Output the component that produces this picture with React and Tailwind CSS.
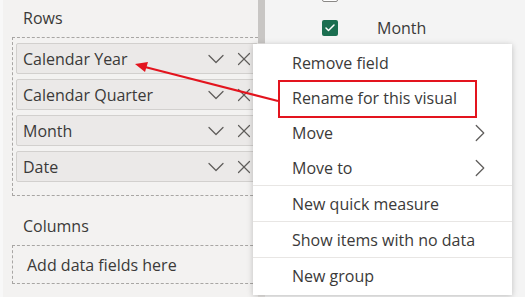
import { ChevronDown, ChevronRight, X, Check } from 'lucide-react'

const ROWS = ['Calendar Year', 'Calendar Quarter', 'Month', 'Date']

const MENU = [
  { label: 'Remove field' },
  { label: 'Rename for this visual' },
  { label: 'Move', sub: true },
  { label: 'Move to', sub: true, sep: true },
  { label: 'New quick measure', sep: true },
  { label: 'Show items with no data', sep: true },
  { label: 'New group' },
]

function FieldPill({ name }) {
  return (
    <div className="h-[31px] flex items-center pl-[6px] pr-[2px] bg-[#ebe9e8] border border-[#d2d0ce] rounded-[2px]">
      <span className="flex-1 truncate">{name}</span>
      <ChevronDown size={28} strokeWidth={1.1} className="text-[#605e5c] mr-[3px]" />
      <X size={22} strokeWidth={1.3} className="text-[#605e5c]" />
    </div>
  )
}

function FieldsList() {
  return (
    <div className="flex-1 bg-[#f4f4f4] pl-[57px] -mt-[23px]">
      <div className="h-[34px] flex items-center">
        <div className="w-[16px] h-[16px] rounded-[2px] border border-[#8a8886] bg-white" />
        <div className="w-[14px] h-[11px] ml-[9px] border-2 border-[#605e5c] rounded-[1px]" />
        <span className="ml-[16px]">Full Date</span>
      </div>
      <div className="h-[34px] flex items-center">
        <div className="w-[16px] h-[16px] rounded-[2px] bg-[#1b6e50] flex items-center justify-center">
          <Check size={12} strokeWidth={3} className="text-white" />
        </div>
        <span className="ml-[39px]">Month</span>
      </div>
    </div>
  )
}

export default function App() {
  return (
    <div
      className="relative w-[525px] h-[297px] overflow-hidden flex text-[16px] text-[#3b3a39]"
      style={{ fontFamily: '"Open Sans", "Noto Sans", sans-serif' }}
    >
      <div className="w-[258px] bg-[#f3f2f1] border-l-[3px] border-[#f8f8f8] pl-[9px] pt-[8px] shrink-0">
        <div className="h-[29px] pl-[11px] leading-[20px]">Rows</div>
        <div className="border border-dashed border-[#a8a6a4] border-r-0 pl-[3px] pt-[5px] pb-[13px] flex flex-col gap-[5px]">
          {ROWS.map((r) => (
            <FieldPill key={r} name={r} />
          ))}
        </div>
        <div className="h-[49px] pl-[11px] pt-[20px] leading-[20px]">Columns</div>
        <div className="h-[39px] border border-dashed border-[#a8a6a4] border-r-0 pl-[14px] flex items-center">
          Add data fields here
        </div>
      </div>
      <div className="w-[7px] bg-[#e6e4e2] shrink-0">
        <div className="h-[43px] bg-[#c8c6c4]" />
      </div>
      <div className="flex-1 flex">
        <FieldsList />
      </div>

      <div className="absolute left-[253px] top-[44px] w-[259px] h-[251px] bg-white shadow-[0_1px_6px_rgba(0,0,0,0.22)] pt-[1px]">
        {MENU.map((m) => (
          <div key={m.label}>
            <div className="h-[35px] flex items-center pl-[39px] pr-[17px]">
              <span className="flex-1">{m.label}</span>
              {m.sub && <ChevronRight size={30} strokeWidth={1} className="text-[#605e5c]" />}
            </div>
            {m.sep && <div className="h-px bg-[#e8e6e4]" />}
          </div>
        ))}
      </div>

      <div className="absolute left-[278px] top-[80px] w-[199px] h-[38px] border-2 border-[#e3141e]" />

      <svg className="absolute inset-0 pointer-events-none" width="525" height="297">
        <line x1="278" y1="101" x2="145" y2="67" stroke="#e3141e" strokeWidth="2" />
        <polygon points="135,64 148,62 145,72" fill="#e3141e" />
      </svg>
    </div>
  )
}
